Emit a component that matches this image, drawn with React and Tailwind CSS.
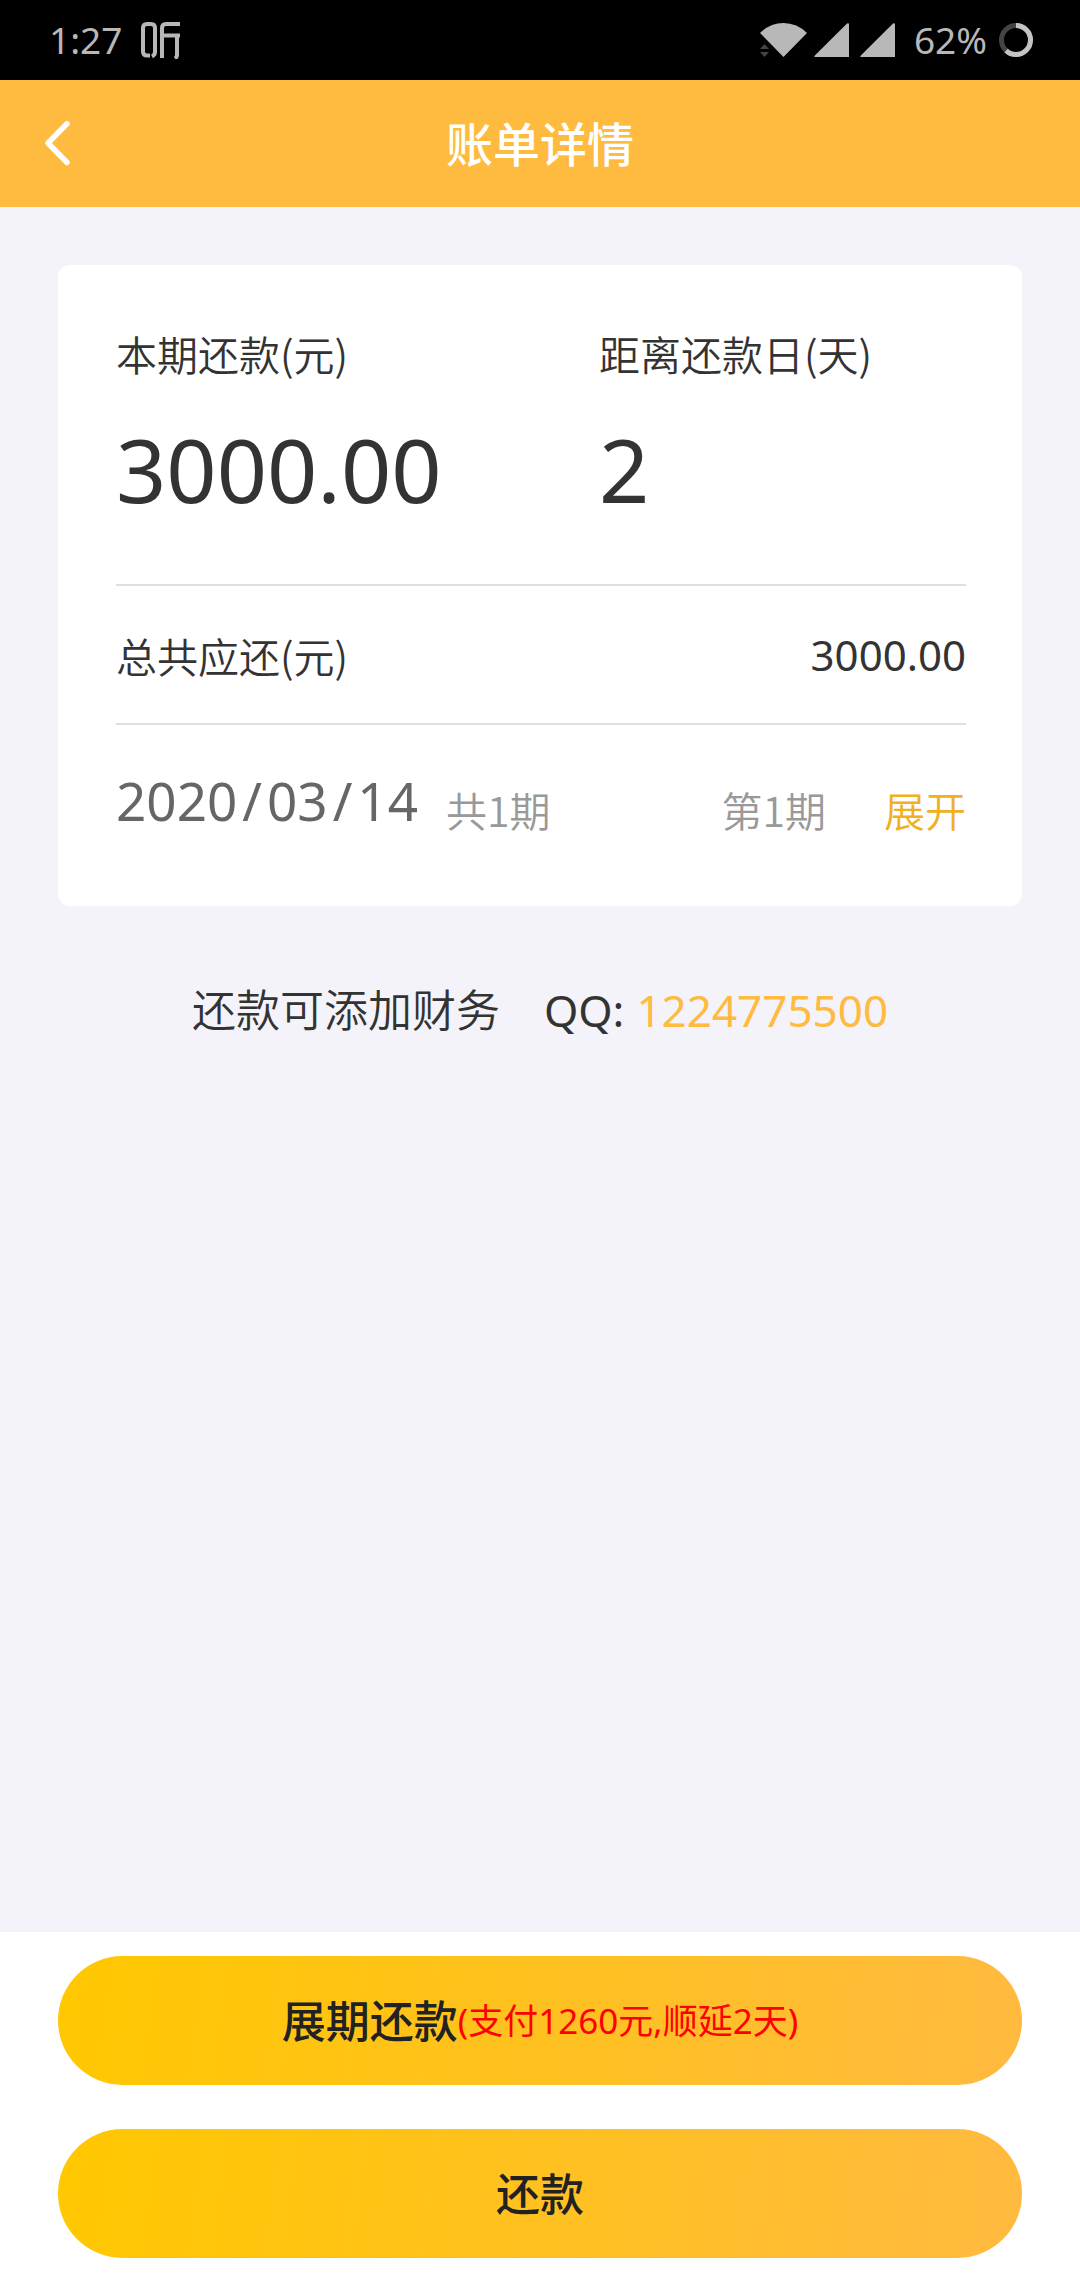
import React, { useState } from 'react';

const bill = {
  amount: '3000.00',
  daysLeft: '2',
  total: '3000.00',
  date: ['2020', '03', '14'],
  periods: '共1期',
  current: '第1期',
  qq: '1224775500',
};

// --- Icons ---
const ListenIcon = () => (
  <svg viewBox="0 0 40 38" className="h-[38px] w-10" fill="none" stroke="#b8b8b8" strokeWidth="4" aria-hidden="true">
    <path d="M10 34.500H7Q3 34.500 3 30.500V7Q3 3 7 3H11Q15 3 15 7V31Q15 34 12 35.500" />
    <path d="M22 37V7Q22 3 26 3H41" />
    <path d="M22 14.500H41" />
    <path d="M37 14V34Q37 36 35 37.500" />
  </svg>
);

const WifiIcon = () => (
  <svg viewBox="0 0 48 34" className="h-[34px] w-12" aria-hidden="true">
    <path d="M0 10Q10 0 23.500 0T47 10L23.500 34Z" fill="#b8b8b8" />
    <path d="M0 26L4.500 21L9 26Z M0 29H9L4.500 34Z" fill="#444" />
  </svg>
);

const SignalIcon = () => (
  <svg viewBox="0 0 35 34" className="h-[34px] w-[35px]" fill="#b8b8b8" aria-hidden="true">
    <path d="M33 0.500Q35 -0.500 35 1.500V34H1.500Q-0.500 34 0.800 32.500Z" />
  </svg>
);

const BatteryIcon = () => (
  <svg viewBox="0 0 34 34" className="h-[34px] w-[34px]" fill="none" strokeWidth="5" aria-hidden="true">
    <circle cx="17" cy="17" r="14.500" stroke="#444" />
    <circle
      cx="17"
      cy="17"
      r="14.500"
      stroke="#c4c4c4"
      pathLength="100"
      strokeDasharray="62 100"
      transform="rotate(-90 17 17)"
    />
  </svg>
);

const BackIcon = () => (
  <svg viewBox="0 0 26 46" className="h-[46px] w-[26px]" fill="none" stroke="#fff" strokeWidth="5.5" strokeLinecap="round" strokeLinejoin="round" aria-hidden="true">
    <path d="M22 2.800L3 22L22 41.500" />
  </svg>
);

function StatusBar() {
  return (
    <div className="flex h-20 items-center justify-between bg-black pl-[49px] pr-[47px] text-[37px] font-normal leading-[48px] text-[#b8b8b8]">
      <div className="flex items-center gap-[18px]">
        <span>1:27</span>
        <ListenIcon />
      </div>
      <div className="flex items-center">
        <WifiIcon />
        <span className="ml-[6px] flex gap-[11px]">
          <SignalIcon />
          <SignalIcon />
        </span>
        <span className="ml-[19px] mr-3">62%</span>
        <BatteryIcon />
      </div>
    </div>
  );
}

function Header() {
  return (
    <header className="grid h-[127px] grid-cols-[1fr_auto_1fr] items-center bg-[#ffba40] px-[45px]">
      <button type="button" aria-label="返回" className="justify-self-start">
        <BackIcon />
      </button>
      <h1 className="text-[47px] font-medium leading-[64px] text-white">账单详情</h1>
    </header>
  );
}

function Label({ children }) {
  return <p className="font-['Noto_Sans_CJK_SC',sans-serif] text-[41px] leading-[48px]">{children}</p>;
}

function Figure({ label, value }) {
  return (
    <div>
      <Label>{label}</Label>
      <p className="mt-11 text-[88px] font-normal leading-[96px]">{value}</p>
    </div>
  );
}

export default function App() {
  const [open, setOpen] = useState(false);

  return (
    <div className="flex min-h-screen flex-col bg-[#f4f3f9] font-['Noto_Sans','Noto_Sans_CJK_SC',sans-serif] font-[350] text-[#333]">
      <StatusBar />
      <Header />

      <main className="flex-1 px-[58px] pt-[58px]">
        <section className="rounded-xl bg-white pl-[58px] pr-14">
          <div className="grid grid-cols-2 gap-x-[116px] border-b-2 border-[#dfdfdf] pb-[67px] pt-16">
            <Figure label="本期还款(元)" value={bill.amount} />
            <Figure label="距离还款日(天)" value={bill.daysLeft} />
          </div>

          <div className="flex items-center justify-between border-b-2 border-[#dfdfdf] pb-11 pt-[45px]">
            <Label>总共应还(元)</Label>
            <span className="text-[42px] font-normal leading-[48px]">{bill.total}</span>
          </div>

          <div className="flex items-start pb-[61px] pt-12 font-['Noto_Sans_CJK_SC',sans-serif] text-[41px] leading-[72px] text-[#999]">
            <time dateTime={bill.date.join('-')} className="font-['Noto_Sans',sans-serif] text-[53px] font-normal leading-[56px] text-[#666]">
              {bill.date[0]}
              <span className="px-[5px]">/</span>
              {bill.date[1]}
              <span className="px-[5px]">/</span>
              {bill.date[2]}
            </time>
            <span className="ml-7">{bill.periods}</span>
            <span className="ml-auto">{bill.current}</span>
            <button type="button" aria-expanded={open} onClick={() => setOpen(!open)} className="ml-[58px] text-[#f0b020]">
              展开
            </button>
          </div>
        </section>

        <p className="mt-[72px] flex justify-center text-[44px] leading-[64px]">
          <span>还款可添加财务</span>
          <span className="ml-11 font-normal">QQ:</span>
          <a href={`mqq://im/chat?uin=${bill.qq}`} className="ml-3 font-normal text-[#ffba40]">{bill.qq}</a>
        </p>
      </main>

      {/* Actions */}
      <footer className="flex flex-col gap-11 bg-white px-[58px] pb-[22px] pt-6 text-[#222]">
        <button type="button" className="flex h-[129px] items-center justify-center rounded-full bg-[linear-gradient(98deg,#ffc800,#ffba40)] text-[44px] leading-[64px]">
          <span className="font-medium">展期还款</span>
          <span className="text-[35px] font-normal text-[#f00]">(支付1260元,顺延2天)</span>
        </button>
        <button type="button" className="h-[129px] rounded-full bg-[linear-gradient(98deg,#ffc800,#ffba40)] text-[44px] font-medium leading-[64px]">
          还款
        </button>
      </footer>
    </div>
  );
}
